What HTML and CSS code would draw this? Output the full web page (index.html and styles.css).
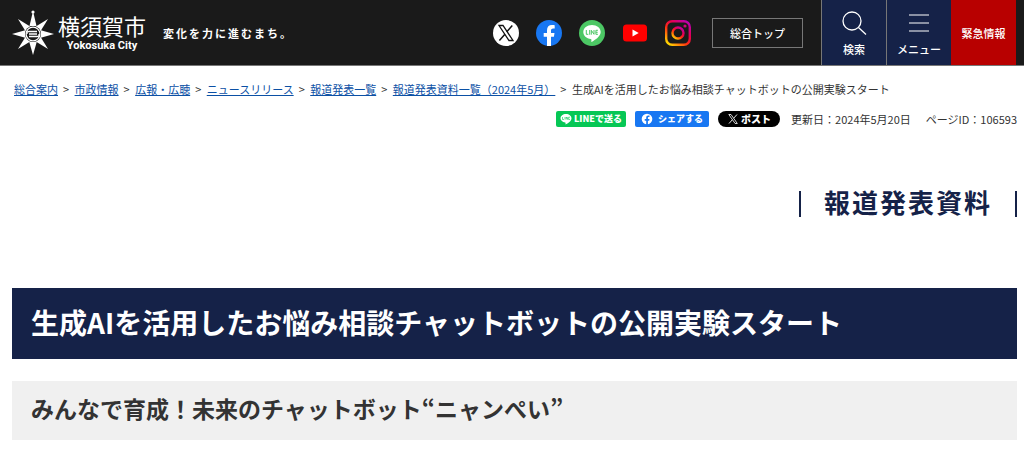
FILE: index.html
```html
<!DOCTYPE html>
<html lang="ja">
<head>
<meta charset="UTF-8">
<meta name="viewport" content="width=device-width, initial-scale=1.0">
<title>生成AIを活用したお悩み相談チャットボットの公開実験スタート｜横須賀市</title>
<link rel="stylesheet" href="styles.css">
</head>
<body>
<header class="header">
    <a class="logo" href="#">
        <svg class="emblem" viewBox="0 0 42 46" aria-hidden="true">
            <g fill="#fff">
                <path d="M21 1L24.500 16H17.500Z"/>
                <circle cx="21" cy="2" r="1.600"/>
                <path d="M21 45L25 31H17Z"/>
                <path d="M0 24L14 20V28Z"/>
                <path d="M42 24L28 20V28Z"/>
                <path d="M6 9L19 17L14 22Z"/>
                <path d="M36 9L23 17L28 22Z"/>
                <path d="M6 39L19 31L14 26Z"/>
                <path d="M36 39L23 31L28 26Z"/>
            </g>
            <circle cx="21" cy="24" r="8" fill="#1a1a1a"/>
            <g fill="none" stroke="#fff" stroke-width="1.300">
                <circle cx="21" cy="24" r="6.900"/>
                <path d="M15 24V22.500Q15 21.500 17 21.500H25M27 24V25.500Q27 26.500 25 26.500H17M17 24H25"/>
            </g>
        </svg>
        <span class="logo-text">
            <span class="logo-ja">横須賀市</span>
            <span class="logo-en">Yokosuka City</span>
        </span>
    </a>
    <p class="tagline">変化を力に進むまち。</p>
    <nav class="sns">
        <a href="#" aria-label="X">
            <svg viewBox="0 0 26 26">
                <circle cx="13" cy="13" r="13" fill="#fff"/>
                <path d="M6 5.500H10L20 20.500H16Z" fill="#fff" stroke="#111" stroke-width="1.300"/>
                <path d="M19.300 5.500L13.800 11.800M11.900 14.200L6.400 20.500" stroke="#111" stroke-width="1.500"/>
            </svg>
        </a>
        <a href="#" aria-label="Facebook">
            <svg viewBox="0 0 26 26">
                <circle cx="13" cy="13" r="13" fill="#1877f2"/>
                <path d="M11 26V16.800H7.700V13H11V10.200C11 6.900 12.900 5.100 15.900 5.100C17.300 5.100 18.700 5.300 18.700 5.300V8.500H17.100C15.500 8.500 15 9.500 15 10.500V13H18.500L17.900 16.800H15V26Z" fill="#fff"/>
            </svg>
        </a>
        <a href="#" aria-label="LINE">
            <svg viewBox="0 0 26 26">
                <circle cx="13" cy="13" r="13" fill="#4cc764"/>
                <path d="M13 5C8.100 5 4.300 8.100 4.300 12.100C4.300 15.700 7.500 18.600 11.800 19.100C12.600 19.300 12.500 20 12.300 21.400C12.300 21.900 12.600 22 13 21.800C15.200 20.600 21.700 16.900 21.700 12.100C21.700 8.100 17.900 5 13 5Z" fill="#fff"/>
                <path d="M7.300 10V14.300H9.300M10.700 10V14.700M12.300 14.700V10.300L15 14.300V10M18.900 10.300H16.900V14.300H18.900M16.900 12.300H18.700" fill="none" stroke="#4cc764" stroke-width="1"/>
            </svg>
        </a>
        <a href="#" aria-label="YouTube">
            <svg viewBox="0 0 26 26">
                <rect x="1" y="4.500" width="24" height="17" rx="3.500" fill="#f00"/>
                <path d="M10.500 9.500V16.500L16.700 13Z" fill="#fff"/>
            </svg>
        </a>
        <a href="#" aria-label="Instagram">
            <svg viewBox="0 0 26 26" fill="none">
                <defs>
                    <linearGradient id="insta" x1="0.100" y1="1" x2="0.900" y2="0">
                        <stop offset="0" stop-color="#fd0"/>
                        <stop offset="0.400" stop-color="#ff3010"/>
                        <stop offset="0.650" stop-color="#e8004c"/>
                        <stop offset="1" stop-color="#b900b4"/>
                    </linearGradient>
                </defs>
                <rect x="1.200" y="1.200" width="23.600" height="23.600" rx="6" stroke="url(#insta)" stroke-width="2.400"/>
                <circle cx="13" cy="13" r="5.500" stroke="url(#insta)" stroke-width="2.400"/>
                <circle cx="20" cy="6" r="1.600" fill="#d1007c"/>
            </svg>
        </a>
    </nav>
    <a class="top-link" href="#">総合トップ</a>
    <div class="tools">
        <button class="tool" type="button">
            <svg viewBox="0 0 26 26" fill="none" stroke="#fff" stroke-width="1.300">
                <circle cx="11" cy="11" r="9"/>
                <path d="M17.500 17.500L25 24.500"/>
            </svg>
            検索
        </button>
        <button class="tool" type="button">
            <svg viewBox="0 0 26 26" stroke="#fff">
                <path d="M3 5H23M3 13H23M3 21H23"/>
            </svg>
            メニュー
        </button>
        <a class="emergency" href="#">緊急情報</a>
    </div>
</header>

<main class="main">
    <nav class="breadcrumb">
        <a href="#">総合案内</a><span>&gt;</span>
        <a href="#">市政情報</a><span>&gt;</span>
        <a href="#">広報・広聴</a><span>&gt;</span>
        <a href="#">ニュースリリース</a><span>&gt;</span>
        <a href="#">報道発表一覧</a><span>&gt;</span>
        <a href="#">報道発表資料一覧（2024年5月）</a><span>&gt;</span>
        生成AIを活用したお悩み相談チャットボットの公開実験スタート
    </nav>

    <div class="page-info">
        <a class="share share-line" href="#">
            <svg viewBox="0 0 12 12" aria-hidden="true">
                <path d="M6 1C2.900 1 0.500 2.900 0.500 5.300C0.500 7.400 2.500 9.100 5.200 9.500C5.700 9.600 5.600 10 5.500 11.500C8 10.500 11.500 8.200 11.500 5.300C11.500 2.900 9.100 1 6 1Z" fill="#fff"/>
                <path d="M2.500 4V6.500H4M5 4V6.500M6.200 6.500V4L7.700 6.500V4M10 4.200H8.700V6.500H10" fill="none" stroke="#06c755" stroke-width="0.600"/>
            </svg>
            LINEで送る
        </a>
        <a class="share share-facebook" href="#">
            <svg viewBox="0 0 12 12" aria-hidden="true">
                <circle cx="6" cy="6" r="5.300" fill="#fff"/>
                <path d="M5.200 12V7.800H3.700V6H5.200V4.800C5.200 3.200 6 2.500 7.400 2.500H8.500V4H7.700C7 4 6.900 4.500 6.900 5V6H8.500L8.200 7.800H6.900V12Z" fill="#1877f2"/>
            </svg>
            シェアする
        </a>
        <a class="share share-x" href="#">
            <svg viewBox="0 0 12 12" fill="none" stroke="#fff" aria-hidden="true">
                <path d="M1.800 1.500H4L10.300 10.500H8.100Z" stroke-width="0.800"/>
                <path d="M10 1.500L6.600 5.300M5.400 6.700L2 10.500" stroke-width="0.900"/>
            </svg>
            ポスト
        </a>
        <span class="date">更新日：2024年5月20日</span>
        <span>ページID：106593</span>
    </div>

    <p class="category">報道発表資料</p>
    <h1 class="title">生成AIを活用したお悩み相談チャットボットの公開実験スタート</h1>
    <h2 class="subtitle">みんなで育成！未来のチャットボット“ニャンぺい”</h2>
</main>
</body>
</html>
```
FILE: styles.css
```css
* {
    box-sizing: border-box;
}

body {
    margin: 0;
    font-family: "Noto Sans CJK JP", sans-serif;
    font-size: 11px;
    line-height: 22px;
    color: #333;
    background: #fff;
}

p, h1, h2 {
    margin: 0;
}

svg {
    display: block;
    flex: none;
}

.header {
    display: flex;
    align-items: center;
    height: 66px;
    padding: 0 8px 0 12px;
    border-bottom: 1px solid #777;
    background: #1a1a1a;
    color: #fff;
}

.header a {
    color: #fff;
    text-decoration: none;
}

.logo {
    display: flex;
    align-items: center;
    gap: 4px;
}

.emblem {
    width: 42px;
    height: 46px;
}

.logo-text {
    display: flex;
    flex-direction: column;
    align-items: center;
    gap: 2px;
}

.logo-ja {
    font-size: 22px;
    line-height: 24px;
}

.logo-en {
    font-family: Roboto, sans-serif;
    font-size: 11px;
    font-weight: bold;
    line-height: 14px;
}

.tagline {
    margin-left: 17px;
    font-weight: bold;
    letter-spacing: 2px;
}

.sns {
    display: flex;
    gap: 17px;
    margin-left: auto;
}

.sns svg {
    width: 26px;
    height: 26px;
}

.top-link {
    margin: 0 18px 0 21px;
    padding: 3px 17px;
    border: 1px solid #777;
    font-weight: 500;
}

.tools {
    display: flex;
    align-self: stretch;
}

.tool,
.emergency {
    display: flex;
    flex-direction: column;
    align-items: center;
    justify-content: center;
    width: 65px;
    font-weight: 500;
}

.tool {
    gap: 2px;
    padding: 4px 0 0;
    border: 0;
    border-left: 1px solid #777;
    background: #152248;
    color: #fff;
    font-family: inherit;
    font-size: 11px;
    line-height: 22px;
    cursor: pointer;
}

.tool svg {
    width: 26px;
    height: 26px;
}

.emergency {
    background: #b80000;
}

.main {
    padding: 12px 7px 12px 12px;
}

.breadcrumb {
    padding: 0 2px;
}

.breadcrumb a {
    color: #0b50a5;
}

.breadcrumb span {
    margin: 0 3px 0 5px;
}

.page-info {
    display: flex;
    align-items: center;
    justify-content: flex-end;
    gap: 9px;
    margin-top: 8px;
}

.share {
    display: flex;
    align-items: center;
    gap: 2px;
    height: 16px;
    padding: 0 4px;
    border-radius: 2px;
    color: #fff;
    font-size: 9px;
    font-weight: 900;
    text-decoration: none;
}

.share svg {
    width: 12px;
    height: 12px;
}

.share-line {
    background: #06c755;
}

.share-facebook {
    gap: 5px;
    padding: 0 6px;
    background: #1877f2;
}

.share-x {
    padding: 0 9px;
    border-radius: 8px;
    background: #000;
    font-size: 10px;
}

.date {
    margin: 0 6px 0 2px;
}

.category {
    width: fit-content;
    margin: 61px 0 0 auto;
    padding: 0 23px 4px;
    border: solid #152248;
    border-width: 0 2px;
    color: #152248;
    font-size: 26px;
    font-weight: bold;
    line-height: 22px;
    letter-spacing: 2px;
}

.title {
    margin-top: 71px;
    padding: 15px 19px 17px;
    background: #152248;
    color: #fff;
    font-size: 28px;
    font-weight: bold;
    line-height: 39px;
}

.subtitle {
    margin-top: 22px;
    padding: 12px 19px 16px;
    background: #f0f0f0;
    font-size: 23px;
    font-weight: bold;
    line-height: 31px;
}
```
